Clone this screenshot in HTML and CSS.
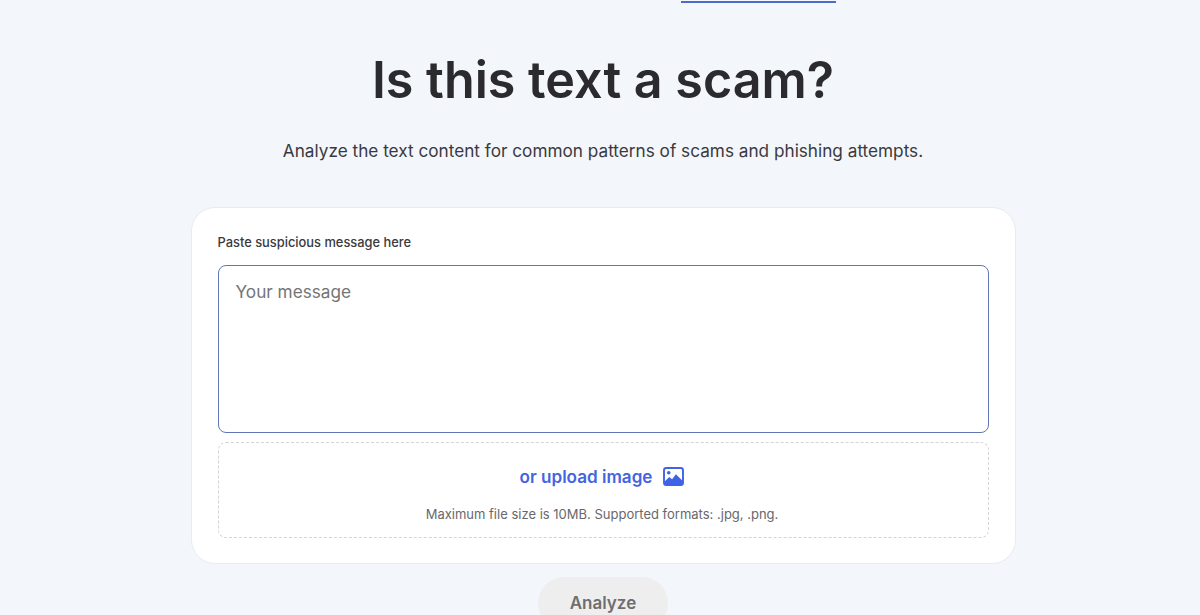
FILE: index.html
```html
<!DOCTYPE html>
<html lang="en">
<head>
  <meta charset="UTF-8">
  <title>Is this text a scam?</title>
  <link rel="stylesheet" href="styles.css">
</head>
<body>

<div class="tabs">
  <span class="tab-active"></span>
</div>

<main class="page">
  <h1 class="title">Is this text a scam?</h1>
  <p class="subtitle">Analyze the text content for common patterns of scams and phishing attempts.</p>

  <form class="card">
    <label for="message" class="field-label">Paste suspicious message here</label>
    <textarea id="message" class="message" placeholder="Your message"></textarea>

    <div class="upload">
      <div class="upload-link">
        <span>or upload image</span>
        <svg class="upload-icon" width="21" height="19" viewBox="0 0 22 20" aria-hidden="true">
          <rect x="1" y="1" width="20" height="18" rx="2.5" fill="#fff" stroke="#3f62e6" stroke-width="2"/>
          <circle cx="6" cy="6" r="1.9" fill="#3f62e6"/>
          <path d="M1.5 18.5V15.5L6.5 10.5L9.5 13L13.5 7.5L20.5 14.5V18.5Z" fill="#3f62e6"/>
        </svg>
      </div>
      <p class="upload-note">Maximum file size is 10MB. Supported formats: .jpg, .png.</p>
    </div>
  </form>

  <button type="button" class="analyze" disabled>Analyze</button>
</main>

</body>
</html>
```

FILE: styles.css
```css
html, body { height: 615px; overflow: hidden; }
body { margin: 0; background: #f3f6fb; color: #2b2b2f; font-family: Inter, "Liberation Sans", sans-serif; }

.tabs { display: flex; height: 3px; padding-left: 681px; }
.tab-active { width: 155px; height: 2px; margin-top: 1px; background: #4f6bc9; }

.page { display: flex; flex-direction: column; align-items: center; padding-left: 6px; }

.title { margin: 45px 0 0; font-size: 50.25px; line-height: 63px; font-weight: 600; }
.subtitle { margin: 28px 0 0; font-size: 17.2px; line-height: 24px; color: #3a3a3e; }

.card { box-sizing: border-box; width: 825px; height: 357px; margin-top: 44px; padding: 26px 26px 25px; background: #fff; border: 1px solid #e8ebf2; border-radius: 24px; }
.field-label { display: block; font-size: 12.87px; line-height: 18px; font-weight: 500; color: #3a3a3e; }

.message { display: block; box-sizing: border-box; width: 771px; height: 168px; margin-top: 13px; padding: 14px 17px; border: 1px solid #5f78b5; border-radius: 8px; outline: none; resize: none; font-family: inherit; font-size: 17.2px; line-height: 24px; }
.message::placeholder { color: #757575; opacity: 1; }

.upload { box-sizing: border-box; height: 96px; margin-top: 9px; padding: 21px 2px 0 0; border: 1px dashed #d4d4d4; border-radius: 8px; text-align: center; }
.upload-link { display: flex; align-items: center; justify-content: center; gap: 11px; height: 24px; font-size: 17.1px; font-weight: 600; color: #4464e0; }
.upload-note { margin: 17px 0 0; font-size: 13px; line-height: 18px; color: #68686c; }

.analyze { width: 130px; height: 52px; margin-top: 13px; flex: none; border: 0; border-radius: 26px; background: #eeeeee; color: #6e6e70; font-family: inherit; font-size: 17px; font-weight: 600; }
```
